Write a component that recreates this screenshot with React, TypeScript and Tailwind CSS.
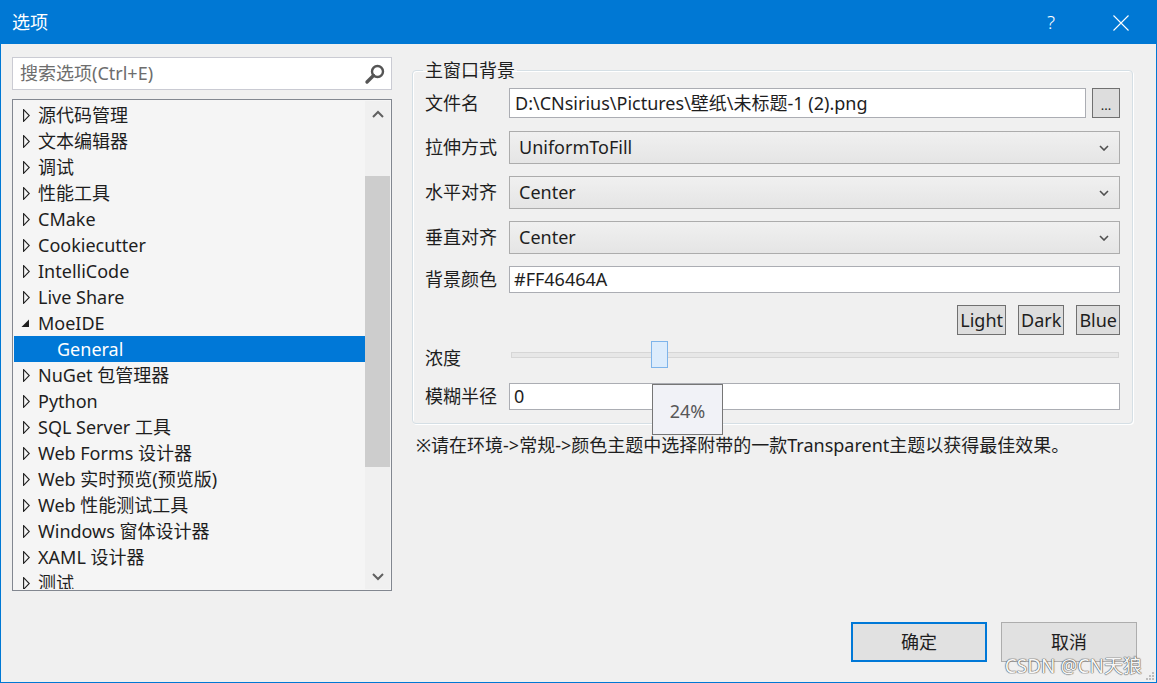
import React from 'react';

const treeItems: { label: string; expanded?: boolean; child?: boolean; selected?: boolean }[] = [
  { label: '源代码管理' },
  { label: '文本编辑器' },
  { label: '调试' },
  { label: '性能工具' },
  { label: 'CMake' },
  { label: 'Cookiecutter' },
  { label: 'IntelliCode' },
  { label: 'Live Share' },
  { label: 'MoeIDE', expanded: true },
  { label: 'General', child: true, selected: true },
  { label: 'NuGet 包管理器' },
  { label: 'Python' },
  { label: 'SQL Server 工具' },
  { label: 'Web Forms 设计器' },
  { label: 'Web 实时预览(预览版)' },
  { label: 'Web 性能测试工具' },
  { label: 'Windows 窗体设计器' },
  { label: 'XAML 设计器' },
  { label: '测试' },
];

const Chevron = () => (
  <svg width="10" height="6" viewBox="0 0 10 6" className="shrink-0">
    <path d="M1 1 L5 5 L9 1" stroke="#505050" strokeWidth="1.6" fill="none" />
  </svg>
);

const Combo = ({ value }: { value: string }) => (
  <div className="flex-1 h-[33px] flex items-center justify-between pl-[9px] pr-[10px] border border-[#acacac] bg-gradient-to-b from-[#f0f0f0] to-[#e5e5e5]">
    <span>{value}</span>
    <Chevron />
  </div>
);

const Row = ({ label, children, className, labelClass }: { label: string; children: React.ReactNode; className?: string; labelClass?: string }) => (
  <div className={`flex items-center ${className ?? ''}`}>
    <div className={`w-[84px] shrink-0 ${labelClass ?? ''}`}>{label}</div>
    {children}
  </div>
);

const App = () => {
  return (
    <div className="w-[1157px] h-[683px] border border-[#0078d4] flex flex-col font-['Noto_Sans','Noto_Sans_CJK_SC',sans-serif] text-[18px] text-[#1e1e1e] overflow-hidden relative">
      {/* title bar */}
      <div className="h-[43px] shrink-0 bg-[#0078d4] flex items-center text-white">
        <span className="ml-[11px] text-[18px]">选项</span>
        <span className="ml-auto text-[19px] font-light mr-[58px]">?</span>
        <svg width="16" height="16" viewBox="0 0 16 16" className="mr-[27px]">
          <path d="M0.5 0.5 L15.5 15.5 M15.5 0.5 L0.5 15.5" stroke="white" strokeWidth="1.1" />
        </svg>
      </div>

      <div className="flex-1 bg-[#f0f0f0] flex flex-col">
        <div className="flex pl-[11px] pt-[13px]">
          {/* left column */}
          <div className="w-[380px] flex flex-col">
            <div className="h-[33px] border border-[#cacbd3] bg-white flex items-center pl-[7px] pr-[5px]">
              <span className="text-[#6d6d6d]">搜索选项(Ctrl+E)</span>
              <svg width="22" height="22" viewBox="0 0 22 22" className="ml-auto">
                <circle cx="13.5" cy="8.5" r="5.5" stroke="#555" strokeWidth="2.4" fill="none" />
                <path d="M9.5 12.5 L3 19" stroke="#555" strokeWidth="3.4" strokeLinecap="round" />
              </svg>
            </div>
            <div className="mt-[9px] h-[492px] border border-[#828790] bg-[#f5f5f5] flex p-[1px]">
              <div className="flex-1 overflow-hidden pt-[1px]">
                {treeItems.map((it) => (
                  <div
                    key={it.label}
                    className={`h-[26px] flex items-center ${it.selected ? 'bg-[#0078d7] text-white' : ''}`}
                  >
                    {it.child ? (
                      <span className="ml-[43px]">{it.label}</span>
                    ) : (
                      <>
                        <span className="w-[24px] flex justify-end pr-[8px]">
                          {it.expanded ? (
                            <svg width="9" height="9" viewBox="0 0 9 9">
                              <path d="M8 0.5 L8 8 L0.5 8 Z" fill="#1e1e1e" />
                            </svg>
                          ) : (
                            <svg width="7" height="13" viewBox="0 0 7 13">
                              <path d="M0.6 0.7 L6.3 6.5 L0.6 12.3 Z" stroke="#1e1e1e" strokeWidth="1.1" fill="none" />
                            </svg>
                          )}
                        </span>
                        <span>{it.label}</span>
                      </>
                    )}
                  </div>
                ))}
              </div>
              {/* scrollbar */}
              <div className="w-[25px] bg-[#f0f0f0] flex flex-col">
                <div className="h-[25px] flex items-center justify-center">
                  <svg width="12" height="8" viewBox="0 0 12 8">
                    <path d="M1 7 L6 2 L11 7" stroke="#606060" strokeWidth="2" fill="none" />
                  </svg>
                </div>
                <div className="flex-1">
                  <div className="mt-[50px] h-[291px] bg-[#cdcdcd]" />
                </div>
                <div className="h-[25px] flex items-center justify-center">
                  <svg width="12" height="8" viewBox="0 0 12 8">
                    <path d="M1 1 L6 6 L11 1" stroke="#606060" strokeWidth="2" fill="none" />
                  </svg>
                </div>
              </div>
            </div>
          </div>

          {/* right column */}
          <div className="ml-[20px] w-[721px] flex flex-col">
            <fieldset className="border border-[#d5dfe5] rounded-[4px] shadow-[inset_1px_1px_0_#ffffff,1px_1px_0_#ffffff] px-[12px] pb-[13px]">
              <legend className="-ml-[2px] px-[2px] leading-[26px]">主窗口背景</legend>
              <Row label="文件名" className="mt-[5px]">
                <div className="flex-1 h-[30px] border border-[#abadb3] bg-white flex items-center pl-[5px]">
                  D:\CNsirius\Pictures\壁纸\未标题-1 (2).png
                </div>
                <div className="ml-[6px] w-[28px] h-[30px] border border-[#707070] bg-[#dddddd] flex items-end justify-center pb-[5px] text-[13px] leading-[13px]">
                  ...
                </div>
              </Row>
              <Row label="拉伸方式" className="mt-[13px]">
                <Combo value="UniformToFill" />
              </Row>
              <Row label="水平对齐" className="mt-[12px]">
                <Combo value="Center" />
              </Row>
              <Row label="垂直对齐" className="mt-[12px]">
                <Combo value="Center" />
              </Row>
              <Row label="背景颜色" className="mt-[12px]">
                <div className="flex-1 h-[27px] border border-[#abadb3] bg-white flex items-center pl-[4px]">#FF46464A</div>
              </Row>
              <div className="mt-[12px] flex justify-end gap-[12px]">
                <div className="h-[30px] px-[2px] border border-[#707070] bg-[#dddddd] flex items-center leading-none">Light</div>
                <div className="h-[30px] px-[2px] border border-[#707070] bg-[#dddddd] flex items-center leading-none">Dark</div>
                <div className="h-[30px] px-[2px] border border-[#707070] bg-[#dddddd] flex items-center leading-none">Blue</div>
              </div>
              <Row label="浓度" className="mt-[6px] h-[27px]" labelClass="pt-[7px]">
                <div className="flex-1 ml-[2px] mr-[1px] h-[27px] flex items-center relative">
                  <div className="w-full h-[6px] border border-[#d6d6d6] bg-[#e7e7e7]" />
                  <div className="absolute left-[140px] top-0 w-[17px] h-[27px] border border-[#7eb4ea] bg-[#dcecfc]" />
                </div>
              </Row>
              <Row label="模糊半径" className="mt-[15px]">
                <div className="flex-1 h-[27px] border border-[#abadb3] bg-white flex items-center pl-[4px] relative">
                  0
                  <div className="absolute left-[142px] top-0 w-[71px] h-[51px] border border-[#767676] bg-[#f1f2f7] flex items-center justify-center pt-[4px] text-[#575757]">
                    24%
                  </div>
                </div>
              </Row>
            </fieldset>
            <div className="mt-[8px] ml-[4px]">※请在环境-&gt;常规-&gt;颜色主题中选择附带的一款Transparent主题以获得最佳效果。</div>
          </div>
        </div>

        {/* footer */}
        <div className="mt-[31px] flex justify-end gap-[14px] pr-[19px]">
          <div className="w-[136px] h-[40px] border-2 border-[#0078d7] bg-[#e1e1e1] flex items-center justify-center">确定</div>
          <div className="w-[136px] h-[40px] border border-[#adadad] bg-[#e1e1e1] flex items-center justify-center">取消</div>
        </div>
      </div>

      <div className="absolute right-[14px] bottom-[5px] text-[19px] leading-[22px] text-[#f7f7f7] [text-shadow:0_0_1px_#555,0_0_1px_#555,0_0_1px_#555]">
        CSDN @CN天狼
      </div>
      <svg width="10" height="10" viewBox="0 0 10 10" className="absolute right-[1px] bottom-[1px]">
        <rect x="7" y="1" width="2" height="2" fill="#bdbdbd" />
        <rect x="4" y="4" width="2" height="2" fill="#bdbdbd" />
        <rect x="7" y="4" width="2" height="2" fill="#bdbdbd" />
        <rect x="1" y="7" width="2" height="2" fill="#bdbdbd" />
        <rect x="4" y="7" width="2" height="2" fill="#bdbdbd" />
        <rect x="7" y="7" width="2" height="2" fill="#bdbdbd" />
      </svg>
    </div>
  );
};

export default App;
